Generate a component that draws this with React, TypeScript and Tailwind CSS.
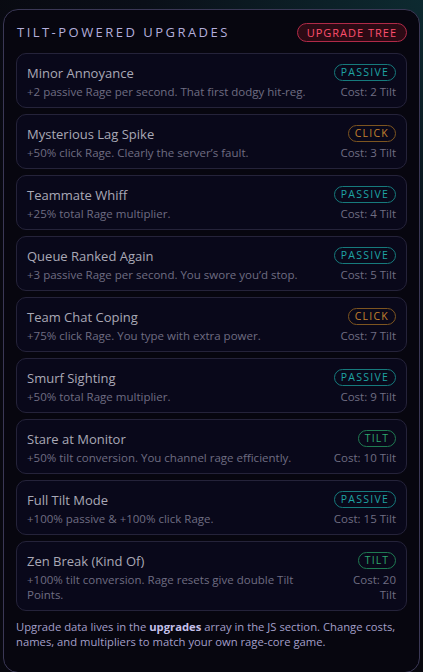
import React from "react";

type Kind = "PASSIVE" | "CLICK" | "TILT";
const upgrades: { name: string; desc: string; kind: Kind; cost: string; narrow?: boolean }[] = [
  { name: "Minor Annoyance", desc: "+2 passive Rage per second. That first dodgy hit-reg.", kind: "PASSIVE", cost: "Cost: 2 Tilt" },
  { name: "Mysterious Lag Spike", desc: "+50% click Rage. Clearly the server’s fault.", kind: "CLICK", cost: "Cost: 3 Tilt" },
  { name: "Teammate Whiff", desc: "+25% total Rage multiplier.", kind: "PASSIVE", cost: "Cost: 4 Tilt" },
  { name: "Queue Ranked Again", desc: "+3 passive Rage per second. You swore you’d stop.", kind: "PASSIVE", cost: "Cost: 5 Tilt" },
  { name: "Team Chat Coping", desc: "+75% click Rage. You type with extra power.", kind: "CLICK", cost: "Cost: 7 Tilt" },
  { name: "Smurf Sighting", desc: "+50% total Rage multiplier.", kind: "PASSIVE", cost: "Cost: 9 Tilt" },
  { name: "Stare at Monitor", desc: "+50% tilt conversion. You channel rage efficiently.", kind: "TILT", cost: "Cost: 10 Tilt" },
  { name: "Full Tilt Mode", desc: "+100% passive & +100% click Rage.", kind: "PASSIVE", cost: "Cost: 15 Tilt" },
  { name: "Zen Break (Kind Of)", desc: "+100% tilt conversion. Rage resets give double Tilt Points.", kind: "TILT", cost: "Cost: 20 Tilt", narrow: true },
];

function Badge({ kind }: { kind: Kind }) {
  if (kind === "PASSIVE")
    return (
      <span className="rounded-full border border-[#167a7c] px-[6px] text-[10.5px] leading-[15px] tracking-[0.12em] text-[#1fa3a3]">
        PASSIVE
      </span>
    );
  if (kind === "CLICK")
    return (
      <span className="rounded-full border border-[#7d5520] px-[6px] text-[10.5px] leading-[15px] tracking-[0.12em] text-[#c4822e]">
        CLICK
      </span>
    );
  return (
    <span className="rounded-full border border-[#1f7a52] px-[6px] text-[10.5px] leading-[15px] tracking-[0.1em] text-[#2ea66e]">
      TILT
    </span>
  );
}

export default function App() {
  return (
    <div
      className="min-h-[672px] w-[423px] px-[3px] pt-[9px] pb-[1px] bg-[radial-gradient(circle_at_100%_0%,#0d2a30_0%,#0a0f18_35%,#08080f_60%),radial-gradient(circle_at_0%_100%,#0f2a1c_0%,transparent_30%)]"
      style={{ fontFamily: '"Open Sans", "Noto Sans", sans-serif', backgroundColor: "#08080f" }}
    >
      <div className="rounded-[15px] border border-[#3b3856] bg-[#07060f] px-[12px] pt-[13px] pb-[23px]">
        <div className="flex items-center justify-between pl-[1px]">
          <div className="text-[13px] tracking-[0.19em] text-[#b3aedb]">TILT-POWERED UPGRADES</div>
          <span className="rounded-full border border-[#b02a48] bg-[#2c0a14] px-[9px] text-[11px] leading-[17px] tracking-[0.09em] text-[#ff4f6e]">
            UPGRADE TREE
          </span>
        </div>
        <div className="mt-[10px] flex flex-col gap-[6px]">
          {upgrades.map((u) => (
            <div
              key={u.name}
              className="flex justify-between gap-3 rounded-[10px] border border-[#25233a] bg-[#09081a] px-[10px] pt-[10px] pb-[8px]"
            >
              <div className="min-w-0 flex-1">
                <div className="text-[13px] leading-[18px] text-[#a9a8b6]">{u.name}</div>
                <div className={`mt-[2px] text-[11.5px] leading-[15px] text-[#6f6d82] ${u.narrow ? "max-w-[280px]" : ""}`}>{u.desc}</div>
              </div>
              <div className="flex shrink-0 flex-col items-end">
                <Badge kind={u.kind} />
                <div className={`mt-[3px] text-right text-[11.5px] leading-[15px] text-[#6f6d82] ${u.narrow ? "max-w-[48px]" : ""}`}>{u.cost}</div>
              </div>
            </div>
          ))}
        </div>
        <p className="mt-[8px] text-[11.25px] leading-[15px] text-[#a39fc9]">
          Upgrade data lives in the <b className="font-bold text-[#c4c0ea]">upgrades</b> array in the JS section. Change costs,
          names, and multipliers to match your own rage-core game.
        </p>
      </div>
    </div>
  );
}
